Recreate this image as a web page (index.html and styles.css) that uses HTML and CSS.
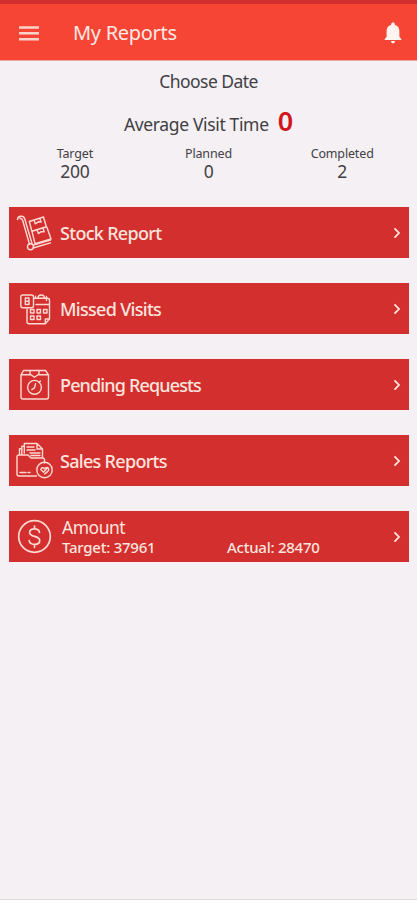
FILE: index.html
```
<!DOCTYPE html>
<html lang="en">
<head>
<meta charset="utf-8">
<title>My Reports</title>
<link rel="stylesheet" href="styles.css">
</head>
<body>
<div class="app">
  <header class="bar">
    <svg class="menu" width="20" height="15" viewBox="0 0 20 15"><path d="M0 1.400h20M0 7.300h20M0 13.200h20" stroke="#ffd3ca" stroke-width="2.500"/></svg>
    <h1 class="title">My Reports</h1>
    <svg class="bell" width="18" height="22" viewBox="0 0 18 22" fill="#fff4f0"><path d="M9 .6c1.100 0 1.800.7 1.800 1.700v.5c3 .8 4.600 3.200 4.600 6.500v5.500L17.300 16.900v1H.7v-1L2.600 14.800V9.300c0-3.300 1.600-5.700 4.600-6.500v-.5C7.200 1.300 7.900.6 9 .6z"/><path d="M7 19h4c0 1.400-.8 2.300-2 2.300S7 20.400 7 19z"/></svg>
  </header>
  <main>
    <div class="date">Choose Date</div>
    <div class="average"><span class="avg-label">Average Visit Time</span><span class="avg-value">0</span></div>
    <div class="stats">
      <div class="stat"><div class="stat-label">Target</div><div class="stat-value">200</div></div>
      <div class="stat"><div class="stat-label">Planned</div><div class="stat-value">0</div></div>
      <div class="stat"><div class="stat-label">Completed</div><div class="stat-value">2</div></div>
    </div>
    <div class="cards">
      <div class="card">
        <svg class="icon" viewBox="0 0 50 51"><path d="M8.500 12.500c0-2 1.200-2.800 3-3.200 2.400-.5 3.500.2 4.200 2.500L23 36.500M11 11.500c1.800-.4 2.200.3 2.700 2L20.500 37.300M24.500 38l17-5M24 41l17.500-5.200"/><circle cx="21.500" cy="39.800" r="3"/><path d="M20.300 14.500 34.500 10l2.800 9.700-14.400 4.500zM23 24.300l14.800-4.400L42 32l-16 4.700zM25 13l1.300 3.800 3-2 2.800.2L30.700 11.300M28 22.800l1.400 3.800 2.800-2 3 .2-1.200-3.800"/></svg>
        <span class="name">Stock Report</span>
        <svg class="chevron" viewBox="0 0 8 12"><path d="M1.500 1.300 6 6 1.500 10.700"/></svg>
      </div>
      <div class="card">
        <svg class="icon" viewBox="0 0 50 51"><path d="M25 15.300h13.500q2 0 2 2V36l-4.200 4.700H20q-2 0-2-2V26M27 21.500h13.500M40.500 36h-4.200v4.700"/><rect x="11.800" y="12" width="12.700" height="12.700" rx="2"/><path d="M16.300 15h3.700v6.500h-3.700zM16.300 18.200H20M26.500 15.300v-2M37.500 17.500v-4M29 15c0-4 6.500-4 6.500 0"/><path d="M21.500 26.500h3.500V30h-3.500zM28 26.500h3.500V30H28zM34.500 26.500H38V30h-3.500zM21.500 33h3.500v3.500h-3.500zM28 33h3.500v3.500H28z"/></svg>
        <span class="name">Missed Visits</span>
        <svg class="chevron" viewBox="0 0 8 12"><path d="M1.500 1.300 6 6 1.500 10.700"/></svg>
      </div>
      <div class="card">
        <svg class="icon" viewBox="0 0 50 51"><path d="M12 15.800 14.500 11.500h22L39.500 15.800V38q0 2-2 2H14q-2 0-2-2zM12 15.800h9.500M29.500 15.800h10M21 12v3l4.500 3.300L30 15v-3"/><circle cx="25.500" cy="28.300" r="6.900"/><path d="M26.500 24.800 25.500 28.800 22.800 30.600M30.300 23.300l1.200-1.200"/></svg>
        <span class="name pending">Pending Requests</span>
        <svg class="chevron" viewBox="0 0 8 12"><path d="M1.500 1.300 6 6 1.500 10.700"/></svg>
      </div>
      <div class="card">
        <svg class="icon" viewBox="0 0 50 51"><path d="M27.500 41H10q-2 0-2-2V22q0-2 2-2h9l3 3h11.500q2 0 2 2v3M10.500 19.800v-6h2.300v-2.500h2.500V8.500H28l5.500 5.500v8.800M28 8.500V14h5.500M12.800 13.800v6M15.300 11.300V18M18 12h7M18 15h8M21 18h10M22 20.500h9M11 37.500h6M19 37.500h2"/><circle cx="35.500" cy="35" r="7.700"/><path d="M31.800 34.500c.8-2.300 2.700-2 3.700-.8 1.700-2 4-1.600 4.200.3.200 1.500-2 3.700-4.200 5M31.800 34.500l2.800 2.700 4-4.500"/></svg>
        <span class="name">Sales Reports</span>
        <svg class="chevron" viewBox="0 0 8 12"><path d="M1.500 1.300 6 6 1.500 10.700"/></svg>
      </div>
      <div class="card">
        <svg class="icon" viewBox="0 0 50 51"><g stroke-width="1.700"><circle cx="25.500" cy="25.500" r="15.800"/><path d="M30.500 21.300c-.4-2.200-2.200-3.500-5-3.500-2.900 0-4.900 1.400-4.900 3.700 0 5.300 10.100 2.500 10.100 8 0 2.400-2.200 3.900-5.100 3.900-3.100 0-5.100-1.500-5.400-3.900M25.500 15v3M25.500 33.300v3"/></g></svg>
        <div class="amount">
          <div class="amount-title">Amount</div>
          <div class="amount-row"><span>Target: 37961</span><span>Actual: 28470</span></div>
        </div>
        <svg class="chevron" viewBox="0 0 8 12"><path d="M1.500 1.300 6 6 1.500 10.700"/></svg>
      </div>
    </div>
  </main>
</div>
</body>
</html>
```
FILE: styles.css
```
* { box-sizing: border-box; }
body {
  margin: 0;
  background: #f5f0f4;
  color: #414044;
  font-family: "Noto Sans", "Open Sans", sans-serif;
}
.app {
  height: 900px;
  overflow: hidden;
  border-bottom: 1px solid #dedadb;
}
.bar {
  display: flex;
  align-items: center;
  height: 61px;
  padding: 2px 15px 0 19px;
  border-top: 4px solid #d32f2f;
  border-bottom: 1px solid #f0a7a3;
  background: #f64435;
}
.title {
  flex: 1;
  margin: 0 0 0 34px;
  color: #ffe9e3;
  font-size: 20px;
  font-weight: 400;
  line-height: 28px;
  letter-spacing: -0.3px;
}
.menu, .bell { display: block; }
.date {
  height: 40px;
  line-height: 40px;
  text-align: center;
  font-size: 17.500px;
  letter-spacing: -0.550px;
}
.average {
  display: flex;
  justify-content: center;
  align-items: baseline;
  gap: 9px;
  height: 44px;
  line-height: 40px;
}
.avg-label { font-size: 17.500px; letter-spacing: -0.350px; }
.avg-value { color: #d0161c; font-size: 27px; font-weight: 600; }
.stats {
  display: grid;
  grid-template-columns: repeat(3, 1fr);
  height: 62px;
  padding: 0 8px;
  text-align: center;
}
.stat-label { height: 17px; line-height: 18px; font-size: 12.500px; letter-spacing: -0.150px; }
.stat-value { line-height: 18px; font-size: 17.500px; letter-spacing: -0.300px; }
.cards { display: flex; flex-direction: column; gap: 25px; padding: 0 8px 0 9px; }
.card {
  display: flex;
  align-items: center;
  height: 51px;
  padding-right: 8px;
  background: #d32f2f;
  color: #ffe5df;
}
.icon {
  width: 50px;
  height: 51px;
  fill: none;
  stroke: #ffd9d2;
  stroke-width: 1.400;
  stroke-linejoin: round;
  stroke-linecap: round;
}
.name {
  flex: 1;
  padding-left: 1px;
  font-size: 18px;
  font-weight: 500;
  line-height: 26px;
  letter-spacing: -0.700px;
}
.pending { letter-spacing: -0.850px; }
.chevron {
  width: 8px;
  height: 12px;
  fill: none;
  stroke: #ffe5df;
  stroke-width: 1.800;
}
.amount { flex: 1; padding-left: 3px; }
.amount-title { font-size: 17.500px; line-height: 22px; letter-spacing: -0.500px; }
.amount-row {
  display: grid;
  grid-template-columns: 165px 1fr;
  font-size: 15px;
  font-weight: 500;
  line-height: 19px;
  letter-spacing: -0.250px;
}
```
